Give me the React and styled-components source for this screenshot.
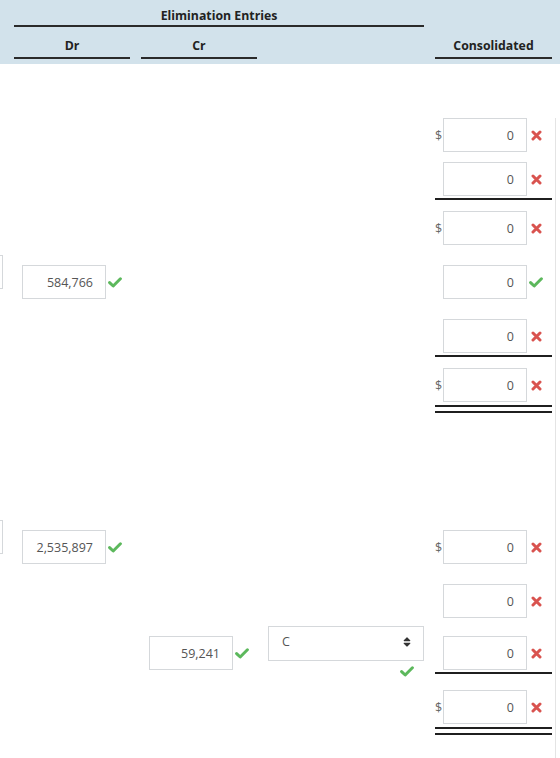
import React from "react";
import styled, { createGlobalStyle } from "styled-components";
import { FaSort } from "react-icons/fa";

const GlobalStyle = createGlobalStyle`
  body {
    margin: 0;
    background: #fff;
    font-family: "Open Sans", "Liberation Sans", Arial, sans-serif;
  }
`;

const COLS = "3px 116px 116px 156px 117px";

const rows = [
  { top: 54, consol: { cur: true, ok: false } },
  { top: 10, consol: { ok: false, rule: "single" } },
  { top: 11, consol: { cur: true, ok: false } },
  { top: 20, partial: true, dr: { value: "584,766", ok: true }, consol: { ok: true } },
  { top: 20, consol: { ok: false, rule: "single" } },
  { top: 11, consol: { cur: true, ok: false, rule: "double" } },
  { top: 117, partial: true, dr: { value: "2,535,897", ok: true }, consol: { cur: true, ok: false } },
  { top: 20, consol: { ok: false } },
  { top: 18, cr: { value: "59,241", ok: true }, select: { value: "C", ok: true }, consol: { ok: false, rule: "single" } },
  { top: 16, consol: { cur: true, ok: false, rule: "double" } },
];

const Page = styled.div`
  width: 560px;
  height: 758px;
  overflow: hidden;
`;

const Header = styled.div`
  background: #d2e2eb;
  height: 64px;
  display: grid;
  grid-template-columns: ${COLS};
  grid-template-rows: 27px 32px;
  column-gap: 11px;
  align-content: start;
`;

const HeadCell = styled.div`
  grid-column: ${({ $col }) => $col};
  grid-row: ${({ $row }) => $row};
  box-sizing: border-box;
  padding-top: ${({ $row }) => ($row === 1 ? "8px" : "11px")};
  font-size: 12.3px;
  line-height: 15px;
  font-weight: 700;
  color: #222;
  text-align: center;
  border-bottom: 2px solid #2a2a2a;
`;

const Body = styled.div`
  width: 555px;
  height: 694px;
  border-right: 1px solid #e4e4e4;
`;

const Row = styled.div`
  display: grid;
  grid-template-columns: ${COLS};
  column-gap: 11px;
  align-items: start;
  margin-top: ${({ $top }) => $top}px;
`;

const Partial = styled.div`
  box-sizing: border-box;
  width: 3px;
  height: 34px;
  margin-top: -10px;
  border: 1px solid #d5d8db;
  border-left: none;
`;

const Cell = styled.div`
  grid-column: ${({ $col }) => $col};
  display: flex;
  flex-direction: column;
`;

const Entry = styled.div`
  display: flex;
  align-items: center;
`;

const Currency = styled.span`
  width: 8px;
  font-size: 12.5px;
  color: #666;
`;

const Input = styled.input`
  box-sizing: border-box;
  width: 84px;
  height: 34px;
  margin: 0;
  border: 1px solid #d5d8db;
  border-radius: 0;
  padding: 0 12px 0 6px;
  font-family: "Open Sans", "Liberation Sans", sans-serif;
  font-size: 12.5px;
  color: #555;
  text-align: right;
  background: #fff;
  outline: none;
`;

const IconSlot = styled.span`
  width: 16px;
  margin-left: 1px;
  display: flex;
  justify-content: center;
`;

const Rule = styled.div`
  margin-top: ${({ $kind }) => ($kind === "double" ? "3px" : "2px")};
  height: ${({ $kind }) => ($kind === "double" ? "4px" : "0")};
  border-top: 2px solid #1f1f1f;
  border-bottom: ${({ $kind }) => ($kind === "double" ? "2px solid #1f1f1f" : "none")};
`;

const SelectCell = styled.div`
  grid-column: 4;
  margin: -10px 0 -8px;
  display: flex;
  flex-direction: column;
  align-items: flex-end;
`;

const SelectBox = styled.div`
  box-sizing: border-box;
  width: 100%;
  height: 35px;
  border: 1px solid #d5d8db;
  padding: 0 10px 4px 13px;
  display: flex;
  align-items: center;
  justify-content: space-between;
  font-size: 12.5px;
  color: #555;
  svg {
    color: #333;
  }
`;

const SelectMark = styled.span`
  margin: 5px 10px 0 0;
  display: flex;
`;

// font-awesome style heavy check / times marks
const Check = () => (
  <svg width="14" height="11" viewBox="0 0 14 11">
    <path
      d="M1.6 5.6 L5.2 9 L12.4 1.8"
      fill="none"
      stroke="#5cb85c"
      strokeWidth="3"
      strokeLinecap="round"
      strokeLinejoin="round"
    />
  </svg>
);

const Cross = () => (
  <svg width="11" height="11" viewBox="0 0 11 11">
    <path
      d="M2 2 L9 9 M9 2 L2 9"
      fill="none"
      stroke="#d9534f"
      strokeWidth="3"
      strokeLinecap="round"
    />
  </svg>
);

const Field = ({ cur, value = "0", ok, rule }) => (
  <>
    <Entry>
      <Currency>{cur ? "$" : ""}</Currency>
      <Input readOnly value={value} />
      <IconSlot>{ok ? <Check /> : <Cross />}</IconSlot>
    </Entry>
    {rule && <Rule $kind={rule} />}
  </>
);

const App = () => {
  return (
    <Page>
      <GlobalStyle />
      <Header>
        <HeadCell $col="2 / 5" $row={1}>Elimination Entries</HeadCell>
        <HeadCell $col="2" $row={2}>Dr</HeadCell>
        <HeadCell $col="3" $row={2}>Cr</HeadCell>
        <HeadCell $col="5" $row={2}>Consolidated</HeadCell>
      </Header>
      <Body>
        {rows.map((row, i) => (
          <Row key={i} $top={row.top}>
            {row.partial && <Partial />}
            {row.dr && (
              <Cell $col={2}>
                <Field {...row.dr} />
              </Cell>
            )}
            {row.cr && (
              <Cell $col={3}>
                <Field {...row.cr} />
              </Cell>
            )}
            {row.select && (
              <SelectCell>
                <SelectBox>
                  <span>{row.select.value}</span>
                  <FaSort size={12} />
                </SelectBox>
                <SelectMark>
                  <Check />
                </SelectMark>
              </SelectCell>
            )}
            <Cell $col={5}>
              <Field {...row.consol} />
            </Cell>
          </Row>
        ))}
      </Body>
    </Page>
  );
};

export default App;
